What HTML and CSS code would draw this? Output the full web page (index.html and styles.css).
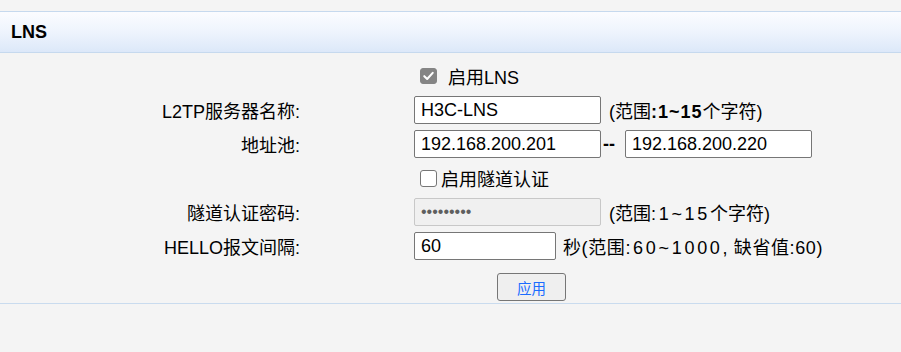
FILE: index.html
```html
<!DOCTYPE html>
<html lang="zh-CN">
<head>
    <meta charset="UTF-8">
    <title>LNS</title>
    <link rel="stylesheet" href="styles.css">
</head>
<body>
    <div class="panel">
        <div class="panel-title">LNS</div>

        <div class="form">
            <div class="label"></div>
            <div class="value">
                <span class="check checked"><svg viewBox="0 0 16 16" width="16" height="16"><path d="M3.5 8.2 L6.6 11.2 L12.5 4.6" fill="none" stroke="#fff" stroke-width="2.2" stroke-linecap="round" stroke-linejoin="round"/></svg></span>
                <span class="check-text spaced">启用LNS</span>
            </div>

            <div class="label">L2TP服务器名称:</div>
            <div class="value">
                <input type="text" class="field" value="H3C-LNS">
                <span class="hint">(范围<b class="num">:1~15</b>个字符)</span>
            </div>

            <div class="label">地址池:</div>
            <div class="value">
                <input type="text" class="field" value="192.168.200.201">
                <span class="dash">--</span>
                <input type="text" class="field" value="192.168.200.220">
            </div>

            <div class="label"></div>
            <div class="value">
                <span class="check"></span>
                <span class="check-text">启用隧道认证</span>
            </div>

            <div class="label">隧道认证密码:</div>
            <div class="value">
                <input type="password" class="field" value="123456789" disabled>
                <span class="hint">(范围<span class="num">:1~15</span>个字符)</span>
            </div>

            <div class="label">HELLO报文间隔:</div>
            <div class="value">
                <input type="text" class="field short" value="60">
                <span class="hint near">秒(范围<span class="num">:60~1000</span>, 缺省值:60)</span>
            </div>

            <div class="actions">
                <button class="apply">应用</button>
            </div>
        </div>
    </div>
</body>
</html>
```

FILE: styles.css
```css
body {
    margin: 0;
    background-color: #f4f4f4;
    font-family: "Liberation Sans", "Noto Sans CJK SC", sans-serif;
    font-size: 18px;
    color: #000;
}
.panel {
    margin-top: 11px;
    border-bottom: 1px solid #c9dbee;
}
.panel-title {
    height: 40px;
    line-height: 40px;
    padding-left: 11px;
    font-size: 18px;
    font-weight: bold;
    border-top: 1px solid #c6d9ee;
    border-bottom: 1px solid #c6d9ee;
    background: linear-gradient(to bottom, #fbfcff 0%, #eef4fd 50%, #dce8f9 100%);
}
.form {
    display: grid;
    grid-template-columns: 300px 1fr;
    grid-template-rows: repeat(6, 34px) 40px;
    column-gap: 114px;
    padding-top: 6px;
}
.label {
    display: flex;
    align-items: center;
    justify-content: flex-end;
    white-space: nowrap;
}
.value {
    display: flex;
    align-items: center;
    white-space: nowrap;
}
.field {
    box-sizing: border-box;
    width: 187px;
    height: 28px;
    margin: 0;
    padding: 0 6px;
    border: 1px solid #767676;
    border-radius: 2px;
    background: #fff;
    font-family: "Liberation Sans", "Noto Sans CJK SC", sans-serif;
    font-size: 18px;
    color: #000;
}
.field:disabled {
    background: #f0f0f0;
    border-color: #c8c8c8;
    color: #5f5f5f;
    font-size: 16px;
}
.field.short {
    width: 142px;
}
.hint {
    margin-left: 8px;
}
.hint.near {
    margin-left: 7px;
    letter-spacing: 0.6px;
}
.num {
    letter-spacing: 2.7px;
}
b.num {
    font-weight: bold;
    letter-spacing: 1px;
}
.dash {
    width: 24px;
    padding-left: 2px;
    box-sizing: border-box;
    font-weight: bold;
}
.check {
    box-sizing: border-box;
    width: 17px;
    height: 17px;
    margin-left: 6px;
    border: 1px solid #767676;
    border-radius: 3px;
    background: #fff;
    display: flex;
    align-items: center;
    justify-content: center;
}
.check.checked {
    height: 16px;
    background: #858585;
    border-color: #858585;
}
.check-text {
    margin-left: 4px;
}
.check-text.spaced {
    margin-left: 11px;
}
.actions {
    grid-column: 2;
    padding: 10px 0 0 83px;
}
.apply {
    box-sizing: border-box;
    width: 69px;
    height: 28px;
    border: 1px solid #767676;
    border-radius: 3px;
    background: #efefef;
    color: #1a6cff;
    font-family: "Liberation Sans", "Noto Sans CJK SC", sans-serif;
    font-size: 14.5px;
    padding: 0;
}
```
